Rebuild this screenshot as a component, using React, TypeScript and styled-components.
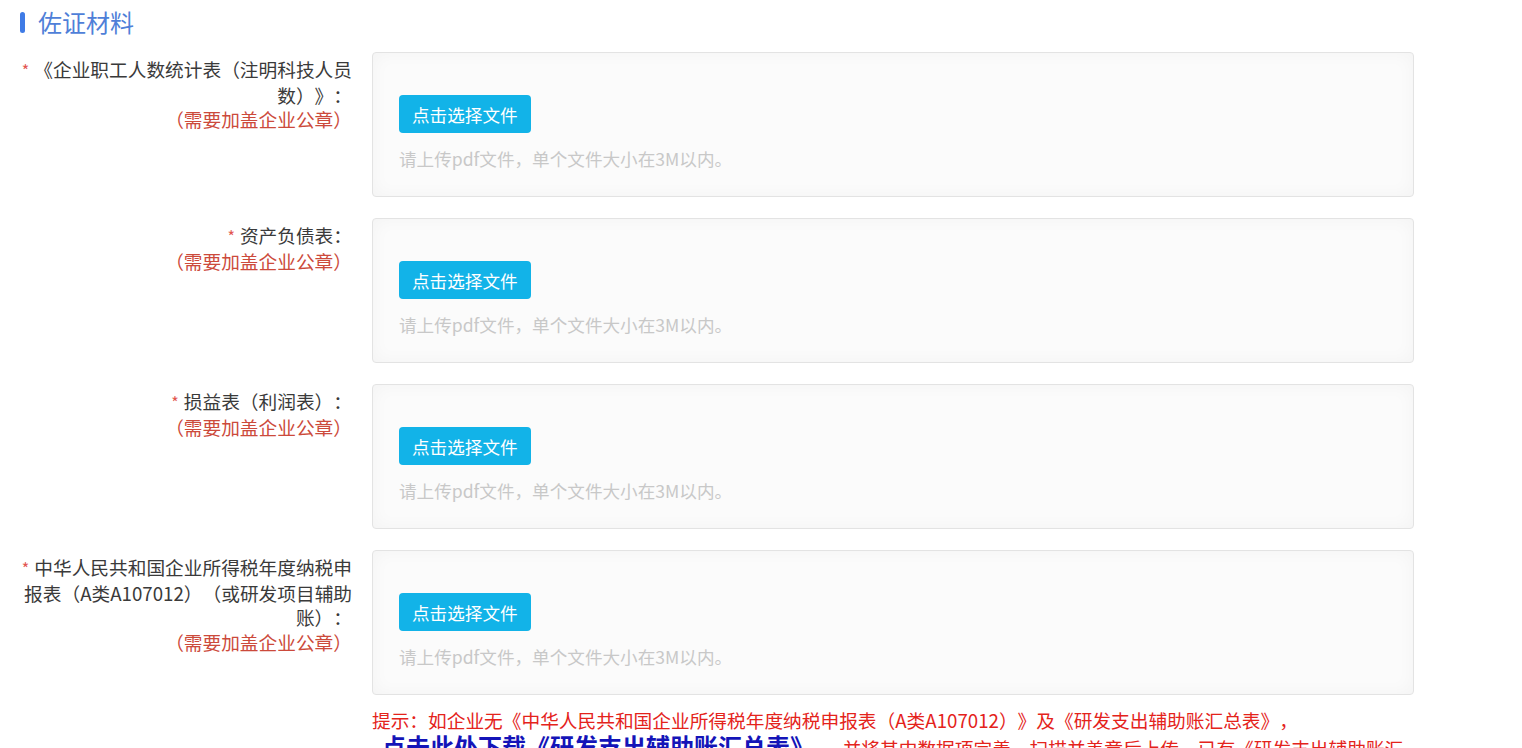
import styled, { createGlobalStyle } from 'styled-components';

type Field = {
  lines: string[];
  sealed?: boolean;
};

const FIELDS: Field[] = [
  { lines: ['《企业职工人数统计表（注明科技人员', '数）》：'], sealed: true },
  { lines: ['资产负债表：'], sealed: true },
  { lines: ['损益表（利润表）：'], sealed: true },
  {
    lines: ['中华人民共和国企业所得税年度纳税申', '报表（A类A107012）（或研发项目辅助', '账）：'],
    sealed: true,
  },
];

const GlobalStyle = createGlobalStyle`
  html, body {
    margin: 0;
    padding: 0;
    background: #ffffff;
  }
  body {
    font-family: "Noto Sans CJK SC", "Liberation Sans", sans-serif;
    color: #3a3a3a;
    text-spacing-trim: space-all;
  }
`;

const UploadField = ({ field }: { field: Field }) => (
  <FieldRow>
    <FieldLabel>
      {field.lines.map((line, i) => (
        <LabelLine key={i}>
          {i === 0 && <Required>*</Required>}
          {line}
        </LabelLine>
      ))}
      {field.sealed && <SealNote>（需要加盖企业公章）</SealNote>}
    </FieldLabel>
    <UploadBox>
      <PickButton type="button">点击选择文件</PickButton>
      <UploadTip>请上传pdf文件，单个文件大小在3M以内。</UploadTip>
    </UploadBox>
  </FieldRow>
);

const App = () => (
  <>
    <GlobalStyle />
    <Page>
      <SectionTitle>
        <TitleBar />
        <TitleText>佐证材料</TitleText>
      </SectionTitle>
      <FieldList>
        {FIELDS.map((f, i) => (
          <UploadField key={i} field={f} />
        ))}
      </FieldList>
      <Notice>
        提示：如企业无《中华人民共和国企业所得税年度纳税申报表（A类A107012）》及《研发支出辅助账汇总表》，
        <DownloadLink href="#">点击此处下载《研发支出辅助账汇总表》</DownloadLink>
        ，并将其中数据项完善，扫描并盖章后上传，已有《研发支出辅助账汇总表》的企业可直接上传。
      </Notice>
    </Page>
  </>
);

const Page = styled.div`
  padding-left: 20px;
  width: 1394px;
`;

const SectionTitle = styled.div`
  display: flex;
  align-items: center;
  height: 44px;
  margin-bottom: 8px;
`;

const TitleBar = styled.span`
  width: 5px;
  height: 21px;
  border-radius: 3px;
  background: #3f7be6;
  margin-right: 13px;
`;

const TitleText = styled.span`
  font-size: 24px;
  color: #4f7fd8;
  line-height: 1;
`;

const FieldList = styled.div`
  display: flex;
  flex-direction: column;
  gap: 21px;
`;

const FieldRow = styled.div`
  display: flex;
  gap: 20px;
`;

const FieldLabel = styled.div`
  width: 332px;
  flex-shrink: 0;
  padding-top: 5px;
  text-align: right;
  font-size: 18.7px;
  line-height: 24.5px;
  color: #3a3a3a;
`;

const LabelLine = styled.div`
  white-space: nowrap;
`;

const Required = styled.span`
  color: #e2564f;
  font-size: 16px;
  margin-right: 5px;
`;

const SealNote = styled.div`
  color: #cc4a3b;
  white-space: nowrap;
`;

const UploadBox = styled.div`
  box-sizing: border-box;
  width: 1042px;
  height: 145px;
  padding: 42px 26px 0;
  border: 1px solid #e3e3e3;
  border-radius: 4px;
  background: #fbfbfb;
  box-shadow: inset 0 0 18px rgba(0, 0, 0, 0.035);
`;

const PickButton = styled.button`
  display: block;
  height: 38px;
  padding: 0 13px;
  border: none;
  border-radius: 4px;
  background: #12b3e8;
  color: #ffffff;
  font-family: inherit;
  font-size: 17.6px;
  cursor: pointer;
`;

const UploadTip = styled.div`
  margin-top: 13px;
  font-size: 17.6px;
  line-height: 26px;
  color: #c8c8c8;
`;

const Notice = styled.p`
  width: 1042px;
  margin: 12px 0 0 352px;
  font-size: 18.7px;
  line-height: 26px;
  color: #e4231b;
`;

const DownloadLink = styled.a`
  display: inline-block;
  margin: 0 10px;
  font-size: 24px;
  line-height: 26px;
  font-weight: 700;
  color: #1414b8;
  text-decoration: none;
`;

export default App;
